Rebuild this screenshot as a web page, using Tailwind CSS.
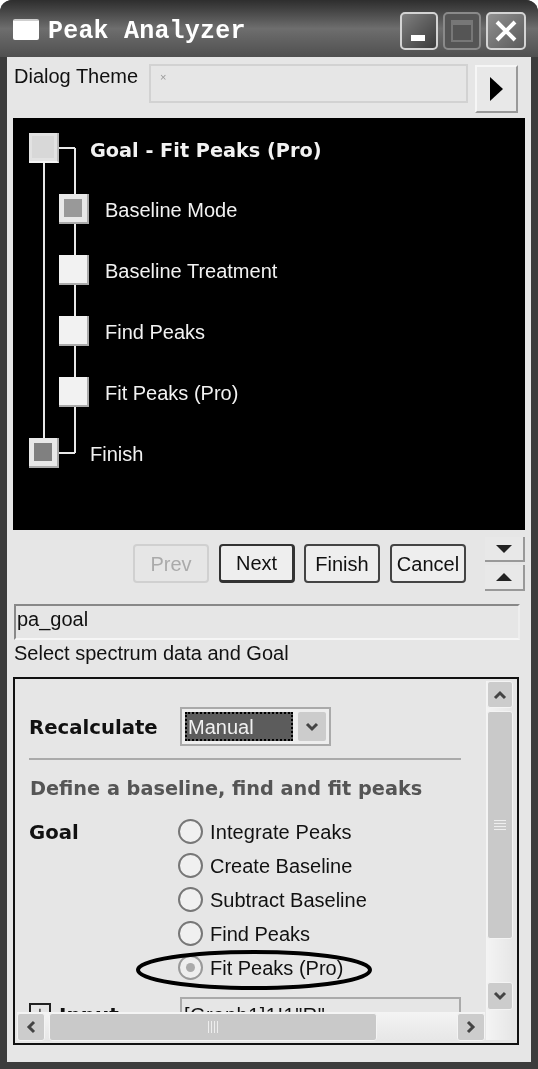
<!DOCTYPE html>
<html lang="en">
<head>
<meta charset="UTF-8">
<title>Peak Analyzer</title>
<script src="https://cdn.jsdelivr.net/npm/@tailwindcss/browser@4"></script>
</head>
<body class="bg-white">
<div class="w-[538px] h-[1069px] overflow-hidden blur-[0.5px] font-['Liberation_Sans',sans-serif] text-[20px] leading-none text-[#111] bg-[#3c3c3c] rounded-t-[12px] flex flex-col">

  <!-- title bar -->
  <div class="h-[57px] shrink-0 flex items-start bg-linear-to-b from-[#2e2e2e] via-[#6e6e6e] to-[#505050] pl-[13px] pr-[12px] pt-[12px]">
    <div class="w-[26px] h-[21px] mt-[7px] bg-white rounded-[2px] border-t-2 border-[#cfcfcf]"></div>
    <div class="ml-[9px] mt-[7px] font-['Liberation_Mono',monospace] font-bold text-[25px] tracking-[0.2px] text-white">Peak Analyzer</div>
    <div class="ml-auto flex gap-[5px]">
      <div class="w-[38px] h-[38px] rounded-[5px] border-2 border-[#d4d4d4] bg-linear-to-br from-[#808080] to-[#3c3c3c] flex items-end pl-[9px] pb-[7px]">
        <div class="w-[14px] h-[6px] bg-white"></div>
      </div>
      <div class="w-[38px] h-[38px] rounded-[5px] border-2 border-[#8a8a8a] bg-[#555] flex items-center justify-center">
        <div class="w-[22px] h-[22px] border-2 border-t-[5px] border-[#777]"></div>
      </div>
      <div class="w-[40px] h-[38px] rounded-[5px] border-2 border-[#d4d4d4] bg-linear-to-br from-[#909090] to-[#5c5c5c] flex items-center justify-center">
        <svg width="24" height="24" viewBox="0 0 24 24"><path d="M3 3 L21 21 M21 3 L3 21" stroke="#fff" stroke-width="4"/></svg>
      </div>
    </div>
  </div>

  <!-- client area -->
  <div class="mx-[7px] h-[1005px] shrink-0 bg-[#e6e6e6] pl-[6px] pr-[6px] flex flex-col">

    <!-- theme row -->
    <div class="h-[61px] shrink-0 flex items-start">
      <span class="w-[136px] mt-[9px] pl-[1px]">Dialog Theme</span>
      <div class="w-[319px] h-[39px] mt-[7px] border-2 border-[#d2d2d2] pl-[9px] pt-[6px] text-[11px] text-[#999]">×</div>
      <div class="w-[43px] h-[48px] ml-[7px] mt-[8px] bg-[#e8e8e8] border-2 border-t-[#f6f6f6] border-l-[#f6f6f6] border-r-[#999] border-b-[#999] flex items-center justify-center">
        <svg width="15" height="26" viewBox="0 0 15 26"><path d="M1 1 L14 13 L1 25 Z" fill="#000"/></svg>
      </div>
    </div>

    <!-- tree -->
    <div class="relative h-[412px] shrink-0 bg-black text-[#f2f2f2]">
      <div class="absolute left-[30px] top-[40px] w-[2px] h-[290px] bg-[#e8e8e8]"></div>
      <div class="absolute left-[61px] top-[30px] w-[2px] h-[305px] bg-[#e8e8e8]"></div>
      <div class="absolute left-[40px] top-[29px] w-[22px] h-[2px] bg-[#e8e8e8]"></div>
      <div class="absolute left-[40px] top-[334px] w-[22px] h-[2px] bg-[#e8e8e8]"></div>
      <div class="relative flex flex-col pt-[15px]">
        <div class="h-[61px] flex items-start">
          <div class="w-[30px] h-[30px] ml-[16px] p-[3px] bg-[#e2e2e2] border-r-2 border-b-2 border-r-[#bbb] border-b-[#f4f4f4]"><div class="w-full h-full bg-[#d8d8d8]"></div></div>
          <span class="ml-[31px] mt-[8px] font-['DejaVu_Sans',sans-serif] font-bold text-[19.3px]">Goal - Fit Peaks (Pro)</span>
        </div>
        <div class="h-[61px] flex items-start pl-[46px]">
          <div class="w-[30px] h-[30px] p-[5px] bg-[#e8e8e8] border-r-2 border-b-2 border-[#aaa]"><div class="w-full h-full bg-[#999]"></div></div>
          <span class="ml-[16px] mt-[6px]">Baseline Mode</span>
        </div>
        <div class="h-[61px] flex items-start pl-[46px]">
          <div class="w-[30px] h-[30px] bg-[#f2f2f2] border-r-2 border-b-2 border-[#aaa]"></div>
          <span class="ml-[16px] mt-[6px]">Baseline Treatment</span>
        </div>
        <div class="h-[61px] flex items-start pl-[46px]">
          <div class="w-[30px] h-[30px] bg-[#f2f2f2] border-r-2 border-b-2 border-[#aaa]"></div>
          <span class="ml-[16px] mt-[6px]">Find Peaks</span>
        </div>
        <div class="h-[61px] flex items-start pl-[46px]">
          <div class="w-[30px] h-[30px] bg-[#f2f2f2] border-r-2 border-b-2 border-[#aaa]"></div>
          <span class="ml-[16px] mt-[6px]">Fit Peaks (Pro)</span>
        </div>
        <div class="h-[61px] flex items-start pl-[16px]">
          <div class="w-[30px] h-[30px] p-[5px] bg-[#e8e8e8] border-r-2 border-b-2 border-[#aaa]"><div class="w-full h-full bg-[#808080]"></div></div>
          <span class="ml-[31px] mt-[6px]">Finish</span>
        </div>
      </div>
    </div>

    <!-- wizard buttons -->
    <div class="h-[64px] shrink-0 flex items-start pl-[120px] pt-[14px]">
      <div class="w-[76px] h-[39px] rounded-[4px] border-2 border-[#d0d0d0] flex items-center justify-center text-[#aaa]">Prev</div>
      <div class="w-[76px] h-[39px] ml-[10px] rounded-[4px] border-2 border-[#333] border-b-[3px] border-r-[3px] bg-[#eee] flex items-center justify-center">Next</div>
      <div class="w-[76px] h-[39px] ml-[9px] rounded-[4px] border-2 border-[#444] bg-[#eee] flex items-center justify-center">Finish</div>
      <div class="w-[76px] h-[39px] ml-[10px] rounded-[4px] border-2 border-[#444] bg-[#eee] flex items-center justify-center">Cancel</div>
      <div class="ml-[19px] -mt-[7px] flex flex-col gap-[3px]">
        <div class="w-[40px] h-[25px] bg-[#e8e8e8] border-r-2 border-b-2 border-[#999] flex items-center justify-center">
          <svg width="18" height="10" viewBox="0 0 18 10"><path d="M1 1 H17 L9 9 Z" fill="#222"/></svg>
        </div>
        <div class="w-[40px] h-[26px] bg-[#e8e8e8] border-r-2 border-b-2 border-[#999] flex items-center justify-center">
          <svg width="18" height="10" viewBox="0 0 18 10"><path d="M1 9 H17 L9 1 Z" fill="#222"/></svg>
        </div>
      </div>
    </div>

    <!-- name and description -->
    <div class="w-[506px] ml-[1px] mt-[10px] h-[36px] shrink-0 border-2 border-t-[#888] border-l-[#888] border-r-[#eee] border-b-[#f6f6f6] pt-[3px] pl-[1px]">pa_goal</div>
    <div class="h-[37px] shrink-0 pt-[3px] pl-[1px]">Select spectrum data and Goal</div>

    <!-- settings panel -->
    <div class="relative w-[506px] h-[368px] shrink-0 border-2 border-[#111] overflow-hidden">
      <div class="flex flex-col pl-[14px] pt-[28px]">
        <div class="flex items-start h-[51px]">
          <span class="w-[151px] mt-[11px] font-['DejaVu_Sans',sans-serif] font-bold text-[19.7px]">Recalculate</span>
          <div class="w-[151px] h-[39px] border-2 border-[#aaa] flex items-center pl-[3px] pr-[3px] bg-[#eee]">
            <div class="w-[109px] h-[29px] bg-[#5c5c5c] border-2 border-dotted border-black text-[#f0f0f0] pl-[1px] pt-[3px]">Manual</div>
            <div class="w-[28px] h-[29px] ml-[5px] bg-[#ccc] rounded-[2px] flex items-center justify-center">
              <svg width="14" height="10" viewBox="0 0 14 10"><path d="M2 2 L7 7 L12 2" fill="none" stroke="#444" stroke-width="3"/></svg>
            </div>
          </div>
        </div>
        <div class="w-[432px] h-[2px] bg-[#aaa]"></div>
        <div class="mt-[19px] ml-[1px] font-['DejaVu_Sans',sans-serif] font-bold text-[19.3px] text-[#555]">Define a baseline, find and fit peaks</div>
        <div class="flex items-start mt-[21px]">
          <span class="w-[149px] mt-[4px] font-['DejaVu_Sans',sans-serif] font-bold text-[19.7px]">Goal</span>
          <div class="flex flex-col">
            <div class="h-[34px] flex items-start"><div class="w-[25px] h-[25px] rounded-full border-2 border-[#777] bg-[#f0f0f0]"></div><span class="ml-[7px] mt-[3px] tracking-[0.1px]">Integrate Peaks</span></div>
            <div class="h-[34px] flex items-start"><div class="w-[25px] h-[25px] rounded-full border-2 border-[#777] bg-[#f0f0f0]"></div><span class="ml-[7px] mt-[3px]">Create Baseline</span></div>
            <div class="h-[34px] flex items-start"><div class="w-[25px] h-[25px] rounded-full border-2 border-[#777] bg-[#f0f0f0]"></div><span class="ml-[7px] mt-[3px]">Subtract Baseline</span></div>
            <div class="h-[34px] flex items-start"><div class="w-[25px] h-[25px] rounded-full border-2 border-[#777] bg-[#f0f0f0]"></div><span class="ml-[7px] mt-[3px]">Find Peaks</span></div>
            <div class="h-[34px] flex items-start"><div class="w-[25px] h-[25px] rounded-full border-2 border-[#999] bg-[#eee] flex items-center justify-center"><div class="w-[9px] h-[9px] rounded-full bg-[#aaa]"></div></div><span class="ml-[7px] mt-[3px]">Fit Peaks (Pro)</span></div>
          </div>
        </div>
        <div class="flex items-start mt-[8px]">
          <div class="w-[22px] h-[22px] mt-[6px] border-2 border-[#222] flex items-start justify-center text-[16px]">+</div>
          <span class="ml-[8px] mt-[8px] w-[121px] font-['DejaVu_Sans',sans-serif] font-bold">Input</span>
          <div class="w-[281px] h-[34px] border-2 border-b-0 border-[#aaa] pl-[2px] pt-[6px] tracking-[0.5px]">[Graph1]1!1"R"</div>
        </div>
      </div>

      <!-- ellipse annotation over the radio list -->
      <svg class="absolute left-[120px] top-[270px]" width="238" height="42" viewBox="0 0 238 42"><ellipse cx="119" cy="21" rx="116" ry="18" fill="none" stroke="#000" stroke-width="4"/></svg>

      <!-- vertical scrollbar -->
      <div class="absolute right-[3px] top-[2px] bottom-[3px] w-[28px] bg-linear-to-r from-[#f4f4f4] to-[#e6e6e6] flex flex-col">
        <div class="h-[27px] mx-[1px] rounded-[3px] bg-[#ccc] border border-[#f4f4f4] flex items-center justify-center">
          <svg width="14" height="10" viewBox="0 0 14 10"><path d="M2 8 L7 3 L12 8" fill="none" stroke="#444" stroke-width="3"/></svg>
        </div>
        <div class="h-[228px] mt-[3px] mx-[1px] rounded-[3px] bg-[#c9c9c9] border border-[#f4f4f4] flex flex-col items-center justify-center gap-[2px]">
          <div class="w-[12px] h-px bg-[#eee]"></div><div class="w-[12px] h-px bg-[#eee]"></div><div class="w-[12px] h-px bg-[#eee]"></div><div class="w-[12px] h-px bg-[#eee]"></div>
        </div>
        <div class="h-[28px] mx-[1px] mt-auto mb-[30px] rounded-[3px] bg-[#ccc] border border-[#f4f4f4] flex items-center justify-center">
          <svg width="14" height="10" viewBox="0 0 14 10"><path d="M2 2 L7 7 L12 2" fill="none" stroke="#444" stroke-width="3"/></svg>
        </div>
      </div>

      <!-- horizontal scrollbar -->
      <div class="absolute left-[2px] bottom-[1px] w-[468px] h-[30px] bg-linear-to-b from-[#f4f4f4] to-[#e6e6e6] flex items-center">
        <div class="w-[28px] h-[28px] rounded-[3px] bg-[#ccc] border border-[#f4f4f4] flex items-center justify-center">
          <svg width="10" height="14" viewBox="0 0 10 14"><path d="M8 2 L3 7 L8 12" fill="none" stroke="#444" stroke-width="3"/></svg>
        </div>
        <div class="w-[328px] h-[28px] ml-[4px] rounded-[3px] bg-[#c9c9c9] border border-[#f4f4f4] flex items-center justify-center gap-[2px]">
          <div class="w-px h-[12px] bg-[#eee]"></div><div class="w-px h-[12px] bg-[#eee]"></div><div class="w-px h-[12px] bg-[#eee]"></div><div class="w-px h-[12px] bg-[#eee]"></div>
        </div>
        <div class="w-[28px] h-[28px] ml-auto rounded-[3px] bg-[#ccc] border border-[#f4f4f4] flex items-center justify-center">
          <svg width="10" height="14" viewBox="0 0 10 14"><path d="M2 2 L7 7 L2 12" fill="none" stroke="#444" stroke-width="3"/></svg>
        </div>
      </div>
    </div>
  </div>
</div>
</body>
</html>
